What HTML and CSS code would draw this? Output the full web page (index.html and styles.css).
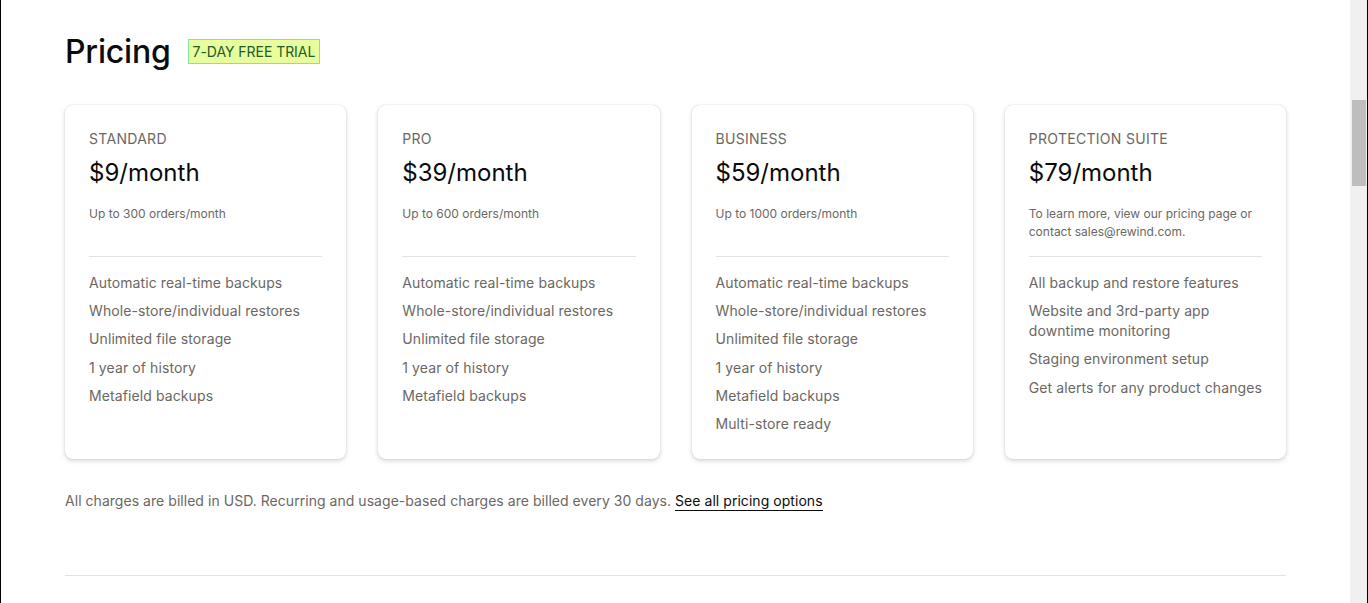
FILE: index.html
```html
<!DOCTYPE html>
<html lang="en">
<head>
<meta charset="utf-8">
<title>Pricing</title>
<link rel="stylesheet" href="styles.css">
</head>
<body>
<div class="frame">
  <main class="page">
    <header class="heading">
      <h1 class="title">Pricing</h1>
      <span class="badge">7-DAY FREE TRIAL</span>
    </header>
    <section class="plans">
      <article class="card">
        <div class="plan-name">STANDARD</div>
        <div class="price">$9/month</div>
        <p class="note">Up to 300 orders/month</p>
        <hr class="divider">
        <ul class="features">
          <li>Automatic real-time backups</li>
          <li>Whole-store/individual restores</li>
          <li>Unlimited file storage</li>
          <li>1 year of history</li>
          <li>Metafield backups</li>
        </ul>
      </article>
      <article class="card">
        <div class="plan-name">PRO</div>
        <div class="price">$39/month</div>
        <p class="note">Up to 600 orders/month</p>
        <hr class="divider">
        <ul class="features">
          <li>Automatic real-time backups</li>
          <li>Whole-store/individual restores</li>
          <li>Unlimited file storage</li>
          <li>1 year of history</li>
          <li>Metafield backups</li>
        </ul>
      </article>
      <article class="card">
        <div class="plan-name">BUSINESS</div>
        <div class="price">$59/month</div>
        <p class="note">Up to 1000 orders/month</p>
        <hr class="divider">
        <ul class="features">
          <li>Automatic real-time backups</li>
          <li>Whole-store/individual restores</li>
          <li>Unlimited file storage</li>
          <li>1 year of history</li>
          <li>Metafield backups</li>
          <li>Multi-store ready</li>
        </ul>
      </article>
      <article class="card">
        <div class="plan-name">PROTECTION SUITE</div>
        <div class="price">$79/month</div>
        <p class="note">To learn more, view our pricing page or contact sales@rewind.com.</p>
        <hr class="divider">
        <ul class="features">
          <li>All backup and restore features</li>
          <li>Website and 3rd-party app downtime monitoring</li>
          <li>Staging environment setup</li>
          <li>Get alerts for any product changes</li>
        </ul>
      </article>
    </section>
    <p class="billing">All charges are billed in USD. Recurring and usage-based charges are billed every 30 days. <a class="link" href="#">See all pricing options</a></p>
    <hr class="rule">
  </main>
  <div class="scrollbar"><div class="thumb"></div></div>
</div>
</body>
</html>
```

FILE: styles.css
```css
* { box-sizing: border-box; }
html, body { margin: 0; padding: 0; height: 100%; background: #fff; }
body { font-family: Inter, "Noto Sans", "Liberation Sans", sans-serif; color: #111; overflow: hidden; }

.frame {
  display: flex;
  height: 603px;
  border-left: 1px solid #000;
  border-right: 1px solid #000;
}

.page {
  flex: 1;
  padding: 32px 64px 0 64px;
}

.scrollbar {
  width: 17px;
  background: #f0f0f0;
  padding: 100px 1px 0 2px;
}
.thumb {
  height: 86px;
  background: #bebebe;
}

.heading {
  display: flex;
  align-items: center;
  gap: 17px;
  height: 40px;
}
.title {
  margin: 0;
  font-size: 32px;
  font-weight: 500;
  line-height: 40px;
  color: #0b0b0b;
  letter-spacing: -0.2px;
}
.badge {
  display: inline-block;
  height: 25px;
  padding: 0 4px;
  line-height: 23px;
  font-size: 14px;
  color: #245a2c;
  background: #e8fe9c;
  border: 1px solid #86e39b;
  margin-top: -1px;
  letter-spacing: -0.05px;
}

.plans {
  display: grid;
  grid-template-columns: repeat(4, 1fr);
  gap: 32px;
  margin-top: 33px;
}
.card {
  background: #fff;
  border-radius: 8px;
  box-shadow: 0 2px 5px rgba(0, 0, 0, 0.16), 0 0 1px rgba(0, 0, 0, 0.2);
  padding: 24px 24px 24px 24px;
  min-height: 354px;
}
.plan-name {
  font-size: 14px;
  line-height: 20px;
  color: #6b6763;
  letter-spacing: 0.3px;
}
.price {
  font-size: 24px;
  line-height: 32px;
  margin-top: 8px;
  color: #0b0b0b;
}
.note {
  margin: 16px 0 0;
  font-size: 12px;
  line-height: 18px;
  min-height: 36px;
  color: #6b6763;
}
.divider {
  border: 0;
  border-top: 1px solid #e3e3e3;
  margin: 15px 0 0;
}
.features {
  list-style: none;
  margin: 16px 0 0;
  padding: 0;
  display: flex;
  flex-direction: column;
  gap: 8.2px;
}
.features li {
  font-size: 14px;
  line-height: 20px;
  color: #6b6763;
  letter-spacing: 0.1px;
}

.billing {
  margin: 32px 0 0;
  font-size: 14px;
  line-height: 20px;
  color: #6b6763;
  letter-spacing: 0.04px;
}
.link {
  color: #0b0b0b;
  text-decoration: none;
  border-bottom: 1px solid #0b0b0b;
  padding-bottom: 1px;
  letter-spacing: 0.05px;
}
.rule {
  border: 0;
  border-top: 1px solid #e3e3e3;
  margin: 64px 0 0;
}
```
